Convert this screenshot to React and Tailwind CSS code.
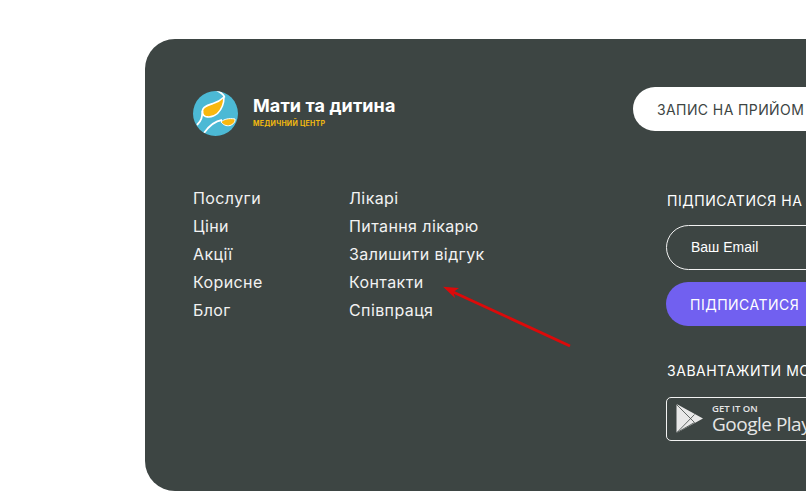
const font = { fontFamily: '"Inter", "Noto Sans", sans-serif' };

function Logo() {
  return (
    <svg width="45" height="45" viewBox="0 0 45 45" className="shrink-0">
      <defs>
        <clipPath id="lc"><circle cx="22.5" cy="22.5" r="22.5" /></clipPath>
      </defs>
      <circle cx="22.5" cy="22.5" r="22.5" fill="#4cb9d5" />
      <g clipPath="url(#lc)">
        <path d="M23 -1C27 1 31 3 31.5 6.5" fill="none" stroke="#fff" strokeWidth="1.8" />
        <path d="M31 6C31 13 28 19 24.5 22.5C21 25.5 16 26.5 12.5 25.5C9.5 24.5 8.5 20.5 10 18C12 14.5 16 14 20 12.5C25 11 28 9 31 6Z" fill="#f9b80f" stroke="#fff" strokeWidth="1.6" strokeLinejoin="round" />
        <path d="M9.5 20C9 26 9 29 4 34" fill="none" stroke="#fff" strokeWidth="1.8" />
        <path d="M28 31C31 28 36 27 42 28C42.5 31 40 33.5 37 34.5C33 35.5 30 33.5 28 31Z" fill="#f9b80f" stroke="#fff" strokeWidth="1" />
        <path d="M11 42C16 35 22 30 29 29" fill="none" stroke="#fff" strokeWidth="1.8" />
      </g>
    </svg>
  );
}

function PlayIcon() {
  return (
    <svg width="28" height="30" viewBox="0 0 28 30" className="shrink-0">
      <path d="M0.5 1C0.5 0.5 1 0.3 1.5 0.5L27 14.5L1.5 28.5C1 28.7 0.5 28.5 0.5 28Z" fill="#e8e8e8" />
      <path d="M1 1L18.5 18.5L1 28.5M1 28.5L18.5 10.5" fill="none" stroke="#3d4543" strokeWidth="0.8" />
    </svg>
  );
}

const col1 = ['Послуги', 'Ціни', 'Акції', 'Корисне', 'Блог'];
const col2 = ['Лікарі', 'Питання лікарю', 'Залишити відгук', 'Контакти', 'Співпраця'];

function Links({ items, className }) {
  return (
    <ul className={className}>
      {items.map((t) => (
        <li key={t} className="h-[28px] leading-[28px] text-[16px] text-[#f2f2f2] tracking-[0.4px] whitespace-nowrap">{t}</li>
      ))}
    </ul>
  );
}

export default function App() {
  return (
    <div className="relative w-[806px] h-[497px] overflow-hidden bg-white pt-[39px] pl-[145px]" style={font}>
      <div className="w-[800px] h-[452px] rounded-[30px] bg-[#3d4543] pl-[48px] pt-[48px]">
        <div className="flex items-start h-[44px]">
          <div className="flex items-center w-[440px] shrink-0 gap-[15px] mt-[4px]">
            <Logo />
            <div className="mb-[3px]">
              <div className="text-[18px] leading-[22px] font-bold text-white tracking-[0.1px] whitespace-nowrap">Мати та дитина</div>
              <div className="text-[7px] leading-[10px] font-bold text-[#f2b90f] mt-[2px] tracking-[0.25px] whitespace-nowrap">МЕДИЧНИЙ ЦЕНТР</div>
            </div>
          </div>
          <div className="h-[44px] w-[300px] shrink-0 rounded-full bg-white pl-[24px] flex items-center text-[14px] tracking-[0.4px] text-[#3d4543] whitespace-nowrap">
            ЗАПИС НА ПРИЙОМ
          </div>
        </div>
        <div className="flex mt-[53px]">
          <Links items={col1} className="w-[156px] shrink-0" />
          <Links items={col2} className="w-[318px] shrink-0" />
          <div className="w-[300px] shrink-0">
            <div className="text-[14px] leading-[20px] text-white tracking-[0.55px] mt-[7px] whitespace-nowrap">ПІДПИСАТИСЯ НА НОВИНИ</div>
            <input
              readOnly
              placeholder="Ваш Email"
              className="block mt-[14px] -ml-[1px] h-[45px] w-[300px] rounded-full border border-[#f2f2f2] bg-transparent pl-[24px] pb-[1px] text-[14px] outline-none placeholder:text-white"
              style={{ fontFamily: '"Liberation Sans", sans-serif' }}
            />
            <div className="mt-[12px] -ml-[1px] h-[44px] w-[300px] rounded-full bg-[#7160f0] flex items-center pl-[24px] text-[14px] tracking-[0.5px] text-white whitespace-nowrap">
              ПІДПИСАТИСЯ
            </div>
            <div className="mt-[35px] text-[14px] leading-[20px] text-white tracking-[0.55px] whitespace-nowrap">ЗАВАНТАЖИТИ МОБІЛЬНИЙ ДОДАТОК</div>
            <div className="mt-[16px] -ml-[1px] h-[44px] w-[170px] rounded-[5px] border border-[#f2f2f2] flex items-center pl-[9px] gap-[8px]">
              <PlayIcon />
              <div className="text-[#e6e6e6] whitespace-nowrap" style={{ fontFamily: '"Open Sans", sans-serif' }}>
                <div className="text-[9.5px] leading-[11px] font-semibold">GET IT ON</div>
                <div className="text-[19px] leading-[21px] tracking-[-0.5px]">Google Play</div>
              </div>
            </div>
          </div>
        </div>
      </div>
      <svg className="absolute left-[430px] top-[270px]" width="150" height="85" viewBox="430 270 150 85">
        <path d="M570 346L453 292" stroke="#dc0a0a" strokeWidth="2.8" fill="none" />
        <path d="M443 286.7L459 288L453.5 292L455 298Z" fill="#dc0a0a" />
      </svg>
    </div>
  );
}
